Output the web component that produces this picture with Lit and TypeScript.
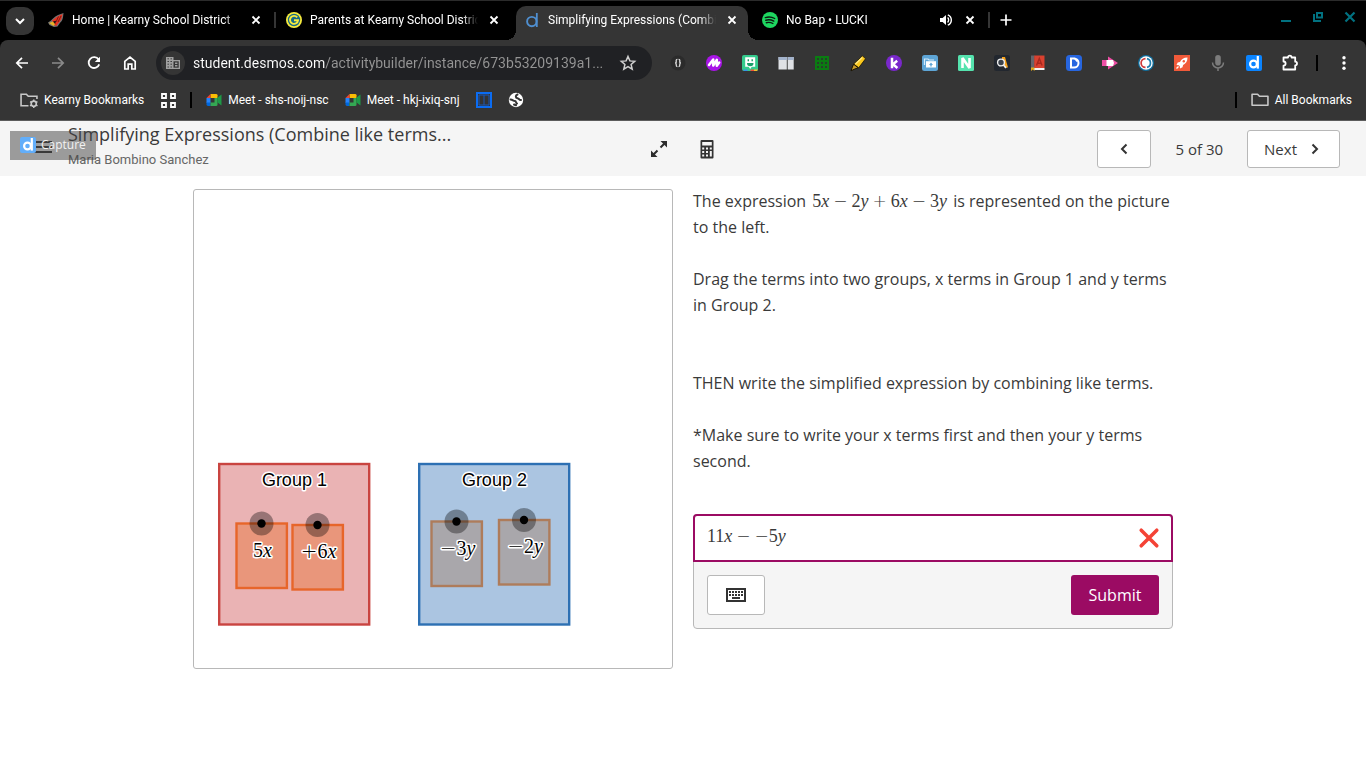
import { LitElement, html, svg, css, nothing, TemplateResult } from "lit";
import { customElement, property, state } from "lit/decorators.js";
import { classMap } from "lit/directives/class-map.js";

/* ---------- icons ---------- */

const icon = (content: TemplateResult, size = 16, box = "0 0 16 16") => html`
  <svg width=${size} height=${size} viewBox=${box} aria-hidden="true">${content}</svg>
`;

const glyph = {
  chevronDown: svg`<path d="M4 6l4 4 4-4" fill="none" stroke="#fff" stroke-width="2"/>`,
  close: svg`<path d="M4.500 4.500l7 7M11.500 4.500l-7 7" stroke="#fff" stroke-width="1.800"/>`,
  plus: svg`<path d="M8 2.500v11M2.500 8h11" stroke="#fff" stroke-width="1.700"/>`,
  back: svg`<path d="M14 8H3M8 2.800L2.800 8 8 13.200" fill="none" stroke="#fff" stroke-width="1.700"/>`,
  forward: svg`<path d="M2 8h11M8 2.800L13.200 8 8 13.200" fill="none" stroke="#8a8a8a" stroke-width="1.700"/>`,
  reload: svg`<path d="M12.600 4.600A5.400 5.400 0 1 0 13.200 9.400" fill="none" stroke="#fff" stroke-width="1.800"/><path d="M14 1.800V7H8.800z" fill="#fff"/>`,
  home: svg`<path d="M2.800 14V6.400L8 2.200l5.200 4.200V14H9.800V9.200H6.200V14z" fill="none" stroke="#fff" stroke-width="1.700"/>`,
  star: svg`<path d="M8 1.500l1.900 4.400 4.800.4-3.600 3.200 1.100 4.700L8 11.700l-4.200 2.500 1.100-4.700-3.600-3.200 4.800-.4z" fill="none" stroke="#d0d0d0" stroke-width="1.500"/>`,
  building: svg`<path d="M1 2h7.500v3H15v9H1z" fill="#a0a0a0"/><path d="M2.500 3.800h1.400M5.500 3.800h1.400M2.500 6.500h1.400M5.500 6.500h1.400M2.500 9.200h1.400M5.500 9.200h1.400M2.500 12h1.400M5.500 12h1.400" stroke="#353535" stroke-width="1"/><path d="M8.500 6.300h5.200v6.400H8.500z" fill="#353535"/><path d="M10 8.200h2.400M10 10.800h2.400" stroke="#a0a0a0" stroke-width="1.400"/>`,
  audio: svg`<path d="M2 6h2.600L8 3v10L4.600 10H2z" fill="#fff"/><path d="M9.600 5.600a3.300 3.300 0 0 1 0 4.800M9.800 2.800a5.600 5.600 0 0 1 0 10.400" fill="none" stroke="#fff" stroke-width="1.400"/>`,
  cardinal: svg`<path d="M0 10.500C4 8.500 6 4.500 10 3L15.500 1c-.4 4-.6 7.500-3.200 9.500L9.500 14.500 6 15 1.500 13z" fill="#747474"/><path d="M4 8.500c2.500-1 3.500-3.500 6.500-4.500L14.500 2c-.6 4-1.500 7-4.500 9.500L8.500 14 6 13z" fill="#e8301f"/><path d="M10.500 4.500L8 10M13 4l-3 6" stroke="#5a1510" stroke-width=".8"/><path d="M1 11l4-1.500 2 2.500-1.500 2z" fill="#e6b428"/><path d="M5 9.500l3-.8-.8 3.300z" fill="#111"/>`,
  goguardian: svg`<circle cx="8" cy="8" r="8" fill="#f6ea3c"/><circle cx="8" cy="8" r="6.200" fill="#176a86"/><path d="M11.200 5.400A4 4 0 1 0 12 8.300H8" fill="none" stroke="#f6ea3c" stroke-width="1.900"/>`,
  desmos: svg`<circle cx="7.800" cy="9.600" r="4.700" fill="none" stroke="#4f8fd0" stroke-width="1.900"/><path d="M12.800 1v14" stroke="#4f8fd0" stroke-width="1.800"/>`,
  spotify: svg`<circle cx="8" cy="8" r="8" fill="#1ed760"/><path d="M3.300 5.600c3-.9 6.700-.6 9.400.9M3.800 8.200c2.600-.7 5.600-.4 8 .9M4.300 10.700c2.200-.5 4.600-.3 6.600.8" fill="none" stroke="#0b1a10" stroke-width="1.400" stroke-linecap="round"/>`,
  minimize: svg`<path d="M3 12h10" stroke="#017180" stroke-width="2"/>`,
  restore: svg`<path d="M7 4h5v4.500H7z" fill="none" stroke="#017180" stroke-width="2"/><path d="M4 5v7h7" fill="none" stroke="#017180" stroke-width="2"/>`,
  windowClose: svg`<path d="M3.500 3.500l9 9M12.500 3.500l-9 9" stroke="#017180" stroke-width="2.200"/>`,
  braces: svg`<circle cx="8" cy="8" r="7.500" fill="#2b2b2b"/><path d="M7.400 4.300Q6 4.300 6.200 6.200T5.200 8Q6.300 8 6.200 9.800T7.400 11.700M8.600 4.300Q10 4.300 9.800 6.200T10.800 8Q9.700 8 9.800 9.800T8.600 11.700" fill="none" stroke="#e0e0e0" stroke-width="1.300"/>`,
  squiggle: svg`<circle cx="8" cy="8" r="8" fill="#a915e8"/><path d="M3 10L7.200 4.600V10.600L10.800 4.800V10.800L13.200 7.500" fill="none" stroke="#fff" stroke-width="2.500" stroke-linejoin="round" stroke-linecap="round"/>`,
  bitmoji: svg`<rect width="16" height="16" rx="2" fill="#34cb8d"/><path d="M1 14.500h4.500V16H2z" fill="#3b8fe8"/><path d="M8.500 14.500H12V16H8.500z" fill="#f24e38"/><path d="M12 14.500h4L15 16h-3z" fill="#f5bf2f"/><path d="M3.200 2.200h10v9.500H9.800L8.200 14l-1.500-2.300H3.200z" fill="#fff"/><path d="M5 8h6.500a3.200 3.200 0 0 1-6.500 0z" fill="#199f69"/><path d="M6.300 4.200v2M10.200 4.200v2" stroke="#199f69" stroke-width="1.400"/>`,
  columns: svg`<path d="M.5 2h8.300v12.500H.5zM9.700 2h6v12.500h-6z" fill="#dfe1e5"/><path d="M.5 2h8.300v3H.5zM9.700 2h6v3h-6z" fill="#a3b3cc"/>`,
  dots: svg`<path d="M1 1h14v14H1z" fill="#0b7c12"/><path d="M3 3h2v2H3zM7 3h2v2H7zM11 3h2v2h-2zM3 7h2v2H3zM7 7h2v2H7zM11 7h2v2h-2zM3 11h2v2H3zM7 11h2v2H7zM11 11h2v2h-2z" fill="#26402a"/>`,
  marker: svg`<path d="M12.500.8l3 3-6.800 9L3.600 9z" fill="#fbc81d" stroke="#1b1605" stroke-width=".8"/><path d="M3.600 9.200l4.600 3.600-3 1L1 15.800 2.400 12z" fill="#c99b28" stroke="#1b1605" stroke-width="1"/><path d="M12.300 2.500L5.500 9" stroke="#ffe88a" stroke-width="1.200"/>`,
  kami: svg`<circle cx="8" cy="8" r="8" fill="#7a28cc"/><path d="M6 2.800v10.400M11.200 5.800L7 9.200l4.400 3.800" fill="none" stroke="#fff" stroke-width="2.500"/>`,
  folders: svg`<rect width="16" height="16" rx="2.500" fill="#5ea5d6"/><path d="M2.500 10V4h3.500l1 1h5" fill="none" stroke="#d4ebfa" stroke-width="1.200"/><path d="M4 6.200h10v6.300H4z" fill="#fff"/><path d="M9 7.500l2 2.500H9.700v1.500H8.300V10H7z" fill="#5ea5d6"/>`,
  letterN: svg`<rect width="16" height="16" rx="1.500" fill="#55e3ae"/><path d="M4.500 13V3l7 10V3" fill="none" stroke="#fff" stroke-width="2.600" stroke-linejoin="bevel"/>`,
  search: svg`<rect width="16" height="16" rx="2.500" fill="#22272f"/><path d="M8 2h3l3 10.500h-2.500L8 6z" fill="#f5a21d"/><circle cx="7" cy="7.500" r="3.400" fill="#39404a" stroke="#eee" stroke-width="1.400"/><path d="M9.500 10l2.500 3" stroke="#eee" stroke-width="1.800"/>`,
  dictionary: svg`<path d="M1 .5h3.500V13H1z" fill="#65646a"/><path d="M4.200 .5H14.500V13H4.200z" fill="#d9412f"/><path d="M6.500 10.500l2.800-7 2.800 7M7.500 8.200h3.800" fill="none" stroke="#a8281e" stroke-width="1.400"/><path d="M3 13h11.500v2H3z" fill="#f2f2f2"/><path d="M1 12.500h3.500V16L2.800 14.500 1 16z" fill="#e0a91a"/>`,
  docD: svg`<rect width="16" height="16" rx="3.500" fill="#2766e0"/><path d="M5 3.500H8a4.500 4.500 0 0 1 0 9H5z" fill="none" stroke="#fff" stroke-width="2"/><path d="M8.300 3l3 3.500" stroke="#fff" stroke-width="1.600"/>`,
  arrowPink: svg`<path d="M0 5h6V1.500L16 8 6 14.500V11H0z" fill="#ef4fa6"/><path d="M4.500 5h6.500l1 3-1 3H4.500z" fill="#fff"/>`,
  ring: svg`<circle cx="8" cy="8" r="8" fill="#116f9e"/><circle cx="8" cy="8" r="6.700" fill="#fff"/><path d="M7.500 3.600a4.400 4.400 0 0 0 0 8.800" fill="none" stroke="#cf3b3b" stroke-width="1.700"/><path d="M9 3.700a4.400 4.400 0 0 1 0 8.600" fill="none" stroke="#1f7fae" stroke-width="1.700"/>`,
  rocket: svg`<path d="M0 0h16v16H0z" fill="#f15a3a"/><path d="M13.500 2.500c-4 0-6 1.800-7.500 4.400L3.700 7.500 2.500 10l2.300.2 1 1 .2 2.300 2.500-1.200.6-2.300c2.600-1.500 4.400-3.500 4.400-7.500z" fill="#fff"/><circle cx="9.800" cy="6.200" r="1.200" fill="#f15a3a"/><path d="M2.500 13.500l2-2" stroke="#fff" stroke-width="1.200"/>`,
  mic: svg`<rect x="5.200" y="0" width="5.600" height="10.500" rx="2.800" fill="#7c7c7c"/><path d="M2.500 7.500a5.500 5.500 0 0 0 11 0M8 13v3" fill="none" stroke="#7c7c7c" stroke-width="1.500"/>`,
  desmosTile: svg`<rect width="16" height="16" rx="2" fill="#0a84ff"/><circle cx="7.500" cy="9" r="3.400" fill="none" stroke="#fff" stroke-width="2.200"/><path d="M11.800 1v12.600" stroke="#fff" stroke-width="2.200"/>`,
  captureTile: svg`<rect width="16" height="16" rx="2" fill="#62aefa"/><circle cx="7.500" cy="9" r="3.400" fill="none" stroke="#fff" stroke-width="2.200"/><path d="M11.800 1v12.600" stroke="#fff" stroke-width="2.200"/>`,
  puzzle: svg`<path d="M1.500 2.500H6a1.800 1.800 0 0 1 3.600 0h3.600v4.200a1.800 1.800 0 0 1 0 3.600V14.500H1.500v-3.800a2 2 0 0 0 0-4.200z" fill="none" stroke="#fff" stroke-width="1.800" stroke-linejoin="round"/>`,
  menuDots: svg`<circle cx="8" cy="2.700" r="1.700" fill="#fff"/><circle cx="8" cy="8" r="1.700" fill="#fff"/><circle cx="8" cy="13.300" r="1.700" fill="#fff"/>`,
  folderGear: svg`<path d="M8 14H1V3h5l1.800 2H16v2.500" fill="none" stroke="#c8c8c8" stroke-width="1.500"/><circle cx="13" cy="12" r="2.400" fill="none" stroke="#c8c8c8" stroke-width="1.500"/><path d="M13 8v1.500M13 14.500V16M9.500 10l1.300.8M15.200 13.200l1.300.8M16.500 10l-1.300.8M10.800 13.200l-1.300.8" stroke="#c8c8c8" stroke-width="1.400"/>`,
  folder: svg`<path d="M1 13.500V3h5.200l1.800 2h8v8.500z" fill="none" stroke="#c8c8c8" stroke-width="1.500" stroke-linejoin="round"/>`,
  apps: svg`<path d="M2 2h4v4H2zM11 2h4v4h-4zM2 11h4v4H2zM11 11h4v4h-4z" fill="none" stroke="#fff" stroke-width="1.800"/>`,
  meet: svg`<path d="M4.500 2H10q1.500 0 1.500 1.300V6H4.500z" fill="#fbbc04"/><path d="M4.500 2v4H.5z" fill="#ea4335"/><path d="M.5 6h4v5h-4z" fill="#2684fc"/><path d="M.5 10.500h4V14H2Q.5 14 .5 12.600z" fill="#0066da"/><path d="M4.500 10.500h4V6h3v6.700Q11.500 14 10 14H4.500z" fill="#34a853"/><path d="M11.500 5.500l4-3v11l-4-3z" fill="#1e9a47"/>`,
  blueBook: svg`<path d="M1 1h14v14H1z" fill="#333" stroke="#0b6cf2" stroke-width="2"/><path d="M3 3h10v10H3zM8 3v10" fill="none" stroke="#1a58b8" stroke-width="1"/>`,
  globe: svg`<circle cx="8" cy="8" r="7.200" fill="#fff"/><path d="M2.500 7.500c2.500.2 2.500 1.500 4.500 1.500 1.500 0 .5 2 2 2.500M9.500 2.500C7 3.500 7.500 6 9.500 6.200s1 1.800 3.500 1.800M6 12.500l2 .8" fill="none" stroke="#353535" stroke-width="2" stroke-linecap="round"/>`,
  expand: svg`<path d="M9.500 6.500L14 2M6.500 9.500L2 14" stroke="#2d2d2d" stroke-width="2"/><path d="M9.500 0H16v6.500zM0 9.500V16h6.500z" fill="#2d2d2d"/>`,
  calculator: svg`<rect x="1.500" y="-1" width="13" height="18.500" rx="1" fill="#333"/><path d="M3.200 1h9.600v3.500H3.200zM3.200 6.500h2v2h-2zM7 6.500h2v2H7zM10.800 6.500h2v2h-2zM3.200 10h2v2h-2zM7 10h2v2H7zM10.800 10h2v5.500h-2zM3.200 13.500h2v2h-2zM7 13.500h2v2H7z" fill="#f5f5f5"/>`,
  previous: svg`<path d="M10.500 3.500L6 8l4.500 4.500" fill="none" stroke="#333" stroke-width="2"/>`,
  next: svg`<path d="M5.500 3.500L10 8l-4.500 4.500" fill="none" stroke="#333" stroke-width="2"/>`,
  hamburger: svg`<path d="M0 4h18M0 9h18M0 14h18" stroke="#333" stroke-width="2"/>`,
  cross: svg`<path d="M2 2L16 16M16 2L2 16" stroke="#f44336" stroke-width="3.200" stroke-linecap="round"/>`,
  keyboard: svg`<path d="M0 1h20v14H0z" fill="#333"/><path d="M2 3h16v10H2z" fill="#fff"/><path d="M3 5h14M3 8h14" stroke="#333" stroke-width="2" stroke-dasharray="2 1"/><path d="M6 11h8" stroke="#333" stroke-width="2"/>`,
};

/* ---------- typeset maths ---------- */

/** Sets letters in italics and gives signs between terms room on both sides. */
const typeset = (source: string) => {
  const parts = source.match(/\d+|[a-z]|[−+]/g) ?? [];
  return parts.map((part, i) => {
    if (/\d/.test(part)) return part;
    if (/[a-z]/.test(part)) return html`<i>${part}</i>`;
    const binary = i > 0 && !/[−+]/.test(parts[i - 1]);
    return html`<span class=${classMap({ sign: true, binary })}>${part}</span>`;
  });
};

const mathStyles = css`
  .math {
    font-family: "Liberation Serif", serif;
    font-size: 18px;
    white-space: nowrap;
  }
  .sign {
    font-family: "DejaVu Sans", sans-serif;
    font-size: 17px;
    font-weight: 200;
  }
  .binary {
    margin: 0 4px;
  }
`;

const resetStyles = css`
  *,
  *::before,
  *::after {
    box-sizing: border-box;
  }
  button {
    display: flex;
    align-items: center;
    justify-content: center;
    margin: 0;
    padding: 0;
    border: 0;
    background: none;
    color: inherit;
    font: inherit;
    cursor: pointer;
  }
  a {
    color: inherit;
    text-decoration: none;
  }
  svg {
    display: block;
    flex: none;
    overflow: visible;
  }
`;

/* ---------- browser tab ---------- */

@customElement("browser-tab")
export class BrowserTab extends LitElement {
  @property() label = "";
  @property({ attribute: false }) favicon: TemplateResult = glyph.desmos;
  @property({ type: Boolean, reflect: true }) active = false;
  @property({ type: Boolean }) playing = false;

  static styles = [
    resetStyles,
    css`
      :host {
        flex: 0 1 232px;
        min-width: 0;
        position: relative;
        display: flex;
        align-items: center;
        gap: 8px;
        height: 34px;
        padding: 0 8px 6px;
        color: #fff;
      }
      :host([active]) {
        border-radius: 10px 10px 0 0;
        background: #353535;
      }
      :host([active])::before,
      :host([active])::after {
        content: "";
        position: absolute;
        bottom: 0;
        width: 10px;
        height: 10px;
      }
      :host([active])::before {
        right: 100%;
        background: radial-gradient(circle at 0 0, transparent 10px, #353535 10px);
      }
      :host([active])::after {
        left: 100%;
        background: radial-gradient(circle at 100% 0, transparent 10px, #353535 10px);
      }
      .title {
        flex: 1;
        min-width: 0;
        overflow: hidden;
        white-space: nowrap;
        -webkit-mask-image: linear-gradient(to left, transparent, #000 16px);
        mask-image: linear-gradient(to left, transparent, #000 16px);
      }
    `,
  ];

  render() {
    return html`
      ${icon(this.favicon)}
      <span class="title">${this.label}</span>
      ${this.playing ? html`<button aria-label="Mute tab">${icon(glyph.audio)}</button>` : nothing}
      <button aria-label="Close tab">${icon(glyph.close)}</button>
    `;
  }
}

/* ---------- browser frame ---------- */

@customElement("browser-chrome")
export class BrowserChrome extends LitElement {
  private extensions: [string, TemplateResult][] = [
    ["JSON viewer", glyph.braces],
    ["Drawing", glyph.squiggle],
    ["Bitmoji", glyph.bitmoji],
    ["Split view", glyph.columns],
    ["Grid", glyph.dots],
    ["Highlighter", glyph.marker],
    ["Kami", glyph.kami],
    ["Screen share", glyph.folders],
    ["Nearpod", glyph.letterN],
    ["Search", glyph.search],
    ["Dictionary", glyph.dictionary],
    ["Documents", glyph.docD],
    ["Screen recorder", glyph.arrowPink],
    ["Reader", glyph.ring],
    ["Launcher", glyph.rocket],
    ["Voice typing", glyph.mic],
    ["Desmos", glyph.desmosTile],
    ["Extensions", glyph.puzzle],
  ];

  static styles = [
    resetStyles,
    css`
      :host {
        display: block;
        background: #000;
        color: #fff;
        font-family: Roboto, sans-serif;
        font-size: 12px;
        line-height: 16px;
      }
      .tabs {
        display: flex;
        align-items: center;
        height: 40px;
        padding: 0 8px 0 6px;
        border-top: 1px solid #2b2b2b;
      }
      .strip {
        flex: 1;
        min-width: 0;
        display: flex;
        align-self: flex-end;
        align-items: center;
        margin-left: 6px;
      }
      .find {
        width: 28px;
        height: 28px;
        border-radius: 10px;
        background: #353535;
      }
      .divider {
        flex: none;
        width: 2px;
        height: 16px;
        margin: 0 2px 6px;
        background: #353535;
      }
      .divider.clear {
        background: none;
      }
      .new {
        width: 28px;
        height: 28px;
        margin-bottom: 6px;
      }
      .window {
        display: flex;
        align-self: flex-start;
        gap: 16px;
        padding-top: 8px;
      }
      .toolbar {
        display: flex;
        align-items: center;
        gap: 8px;
        height: 46px;
        padding: 0 8px;
        border-radius: 8px 8px 0 0;
        background: #353535;
      }
      .toolbar button {
        flex: none;
        width: 28px;
        height: 28px;
      }
      .omnibox {
        flex: 1;
        min-width: 0;
        display: flex;
        align-items: center;
        gap: 8px;
        height: 34px;
        margin: 0 4px;
        padding: 0 10px 0 5px;
        border-radius: 17px;
        background: #202124;
      }
      .omnibox .site {
        width: 24px;
        height: 24px;
        border-radius: 12px;
        background: #353535;
      }
      .address {
        flex: 1;
        min-width: 0;
        height: 20px;
        margin: 0;
        padding: 0;
        border: 0;
        outline: 0;
        background: linear-gradient(90deg, #fff 132px, #959595 132px);
        background-clip: text;
        -webkit-background-clip: text;
        color: transparent;
        font: 14px/20px Roboto, sans-serif;
      }
      .rule {
        flex: none;
        width: 2px;
        height: 16px;
        background: #000;
      }
      .toolbar .rule {
        margin: 0 4px;
      }
      .bookmarks {
        display: flex;
        align-items: center;
        gap: 16px;
        height: 35px;
        padding: 0 14px 6px 20px;
        border-bottom: 1px solid #5c5c5c;
        background: #353535;
      }
      .bookmarks .rule {
        margin: 0 -2px;
      }
      .bookmarks a,
      .bookmarks button {
        display: flex;
        align-items: center;
        gap: 6px;
        white-space: nowrap;
      }
      .bookmarks .space {
        flex: 1;
      }
    `,
  ];

  render() {
    return html`
      <div class="tabs">
        <button class="find" aria-label="Search tabs">${icon(glyph.chevronDown)}</button>
        <div class="strip">
          <browser-tab label="Home | Kearny School District" .favicon=${glyph.cardinal}></browser-tab>
          <span class="divider"></span>
          <browser-tab label="Parents at Kearny School District" .favicon=${glyph.goguardian}></browser-tab>
          <span class="divider clear"></span>
          <browser-tab active label="Simplifying Expressions (Combine like terms)" .favicon=${glyph.desmos}></browser-tab>
          <span class="divider clear"></span>
          <browser-tab playing label="No Bap • LUCKI" .favicon=${glyph.spotify}></browser-tab>
          <span class="divider"></span>
          <button class="new" aria-label="New tab">${icon(glyph.plus)}</button>
        </div>
        <div class="window">
          <button aria-label="Minimize">${icon(glyph.minimize)}</button>
          <button aria-label="Restore">${icon(glyph.restore)}</button>
          <button aria-label="Close window">${icon(glyph.windowClose)}</button>
        </div>
      </div>
      <div class="toolbar">
        <button aria-label="Back">${icon(glyph.back)}</button>
        <button aria-label="Forward">${icon(glyph.forward)}</button>
        <button aria-label="Reload">${icon(glyph.reload)}</button>
        <button aria-label="Home">${icon(glyph.home)}</button>
        <div class="omnibox">
          <button class="site" aria-label="Site information">${icon(glyph.building)}</button>
          <input
            class="address"
            aria-label="Address"
            spellcheck="false"
            .value=${"student.desmos.com/activitybuilder/instance/673b53209139a1..."}
          />
          <button aria-label="Bookmark this page">${icon(glyph.star)}</button>
        </div>
        ${this.extensions.map(([name, mark]) => html`<button aria-label=${name}>${icon(mark)}</button>`)}
        <span class="rule"></span>
        <button aria-label="Menu">${icon(glyph.menuDots)}</button>
      </div>
      <div class="bookmarks">
        <button>${icon(glyph.folderGear, 18, "0 0 17 17")}Kearny Bookmarks</button>
        <a href="#apps" aria-label="Apps">${icon(glyph.apps)}</a>
        <span class="rule"></span>
        <a href="#meet-shs">${icon(glyph.meet)}Meet - shs-noij-nsc</a>
        <a href="#meet-hkj">${icon(glyph.meet)}Meet - hkj-ixiq-snj</a>
        <a href="#book" aria-label="Textbook">${icon(glyph.blueBook)}</a>
        <a href="#web" aria-label="Web">${icon(glyph.globe)}</a>
        <span class="space"></span>
        <span class="rule"></span>
        <button>${icon(glyph.folder, 18, "0 0 17 17")}All Bookmarks</button>
      </div>
    `;
  }
}

/* ---------- graph with draggable terms ---------- */

interface Term {
  sign: string;
  digits: string;
  letter: string;
  x: number;
  y: number;
  fill: string;
  stroke: string;
}

@customElement("term-graph")
export class TermGraph extends LitElement {
  private terms: Term[] = [
    { sign: "", digits: "5", letter: "x", x: 67.5, y: 333.5, fill: "#e9967b", stroke: "#e7652a" },
    { sign: "+", digits: "6", letter: "x", x: 123.5, y: 335, fill: "#e9967b", stroke: "#e7652a" },
    { sign: "−", digits: "3", letter: "y", x: 262.5, y: 331.5, fill: "#a9a7ab", stroke: "#ae7c5b" },
    { sign: "−", digits: "2", letter: "y", x: 330, y: 330, fill: "#a9a7ab", stroke: "#ae7c5b" },
  ];

  static styles = css`
    :host {
      display: block;
      overflow: hidden;
      aspect-ratio: 1;
      border: 1px solid #b8b8b8;
      border-radius: 3px;
      background: #fff;
    }
    svg {
      display: block;
      width: 100%;
    }
    .box {
      stroke-width: 2.4;
    }
    .label {
      fill: #000;
      stroke: #fff;
      stroke-width: 3;
      stroke-linejoin: round;
      paint-order: stroke;
      text-anchor: middle;
      font-family: "Liberation Sans", sans-serif;
      font-size: 18px;
    }
    .label.term {
      font-family: "Liberation Serif", serif;
      font-size: 20px;
    }
    .sign {
      font-family: "DejaVu Sans", sans-serif;
      font-size: 20px;
      font-weight: 200;
    }
    .letter {
      font-style: italic;
    }
    .halo {
      fill: #000;
      fill-opacity: 0.35;
    }
  `;

  render() {
    return html`
      <svg viewBox="0 0 478 478" role="img" aria-label="Two groups holding the terms of the expression">
        <rect class="box" x="25.200" y="274" width="150" height="160.500" fill="#eab3b4" stroke="#c94440" />
        <rect class="box" x="225.200" y="274" width="150" height="160.500" fill="#abc5e1" stroke="#2d70b3" />
        <text class="label" x="100.400" y="296">Group 1</text>
        <text class="label" x="300.400" y="296">Group 2</text>
        ${this.terms.map(
          (t) => svg`
            <rect class="box" x=${t.x - 25} y=${t.y} width="50.400" height="64.500" fill=${t.fill} stroke=${t.stroke} />
            <circle class="halo" cx=${t.x} cy=${t.y} r="12" />
            <circle cx=${t.x} cy=${t.y} r="4.200" />
            <text class="label term" x=${t.x + 1} y=${t.y + 33}>${
              t.sign ? svg`<tspan class="sign">${t.sign}</tspan>` : nothing
            }${t.digits}<tspan class="letter">${t.letter}</tspan></text>
          `
        )}
      </svg>
    `;
  }
}

/* ---------- answer box ---------- */

@customElement("answer-box")
export class AnswerBox extends LitElement {
  @state() private value = "11x − −5y";

  static styles = [
    resetStyles,
    mathStyles,
    css`
      :host {
        display: block;
        border: 1px solid #b8b8b8;
        border-radius: 4px;
        background: #f5f5f5;
      }
      .field {
        position: relative;
        display: flex;
        align-items: center;
        height: 48px;
        margin: -1px -1px 0;
        padding: 0 12px;
        border: 2px solid #9b0b63;
        border-radius: 4px 4px 0 0;
        background: #fff;
      }
      .shown {
        flex: 1;
        padding-bottom: 4px;
        line-height: 24px;
      }
      .entry {
        position: absolute;
        inset: 0;
        width: 100%;
        padding: 0 44px 4px 12px;
        border: 0;
        outline: 0;
        background: none;
        color: transparent;
        caret-color: #333;
      }
      .footer {
        display: flex;
        justify-content: space-between;
        padding: 13px;
      }
      .keypad {
        width: 58px;
        height: 40px;
        border: 1px solid #b8b8b8;
        border-radius: 3px;
        background: #fff;
      }
      .submit {
        min-width: 88px;
        height: 40px;
        padding: 0 16px;
        border-radius: 3px;
        background: #9b0b63;
        color: #fff;
      }
    `,
  ];

  private onInput(e: Event) {
    this.value = (e.target as HTMLInputElement).value.replace(/-/g, "−");
  }

  render() {
    return html`
      <div class="field">
        <span class="shown math" aria-hidden="true">${typeset(this.value)}</span>
        ${icon(glyph.cross, 20, "0 0 18 18")}
        <input class="entry math" aria-label="Simplified expression" .value=${this.value} @input=${this.onInput} />
      </div>
      <div class="footer">
        <button class="keypad" aria-label="Open keypad">${icon(glyph.keyboard, 20, "0 0 20 16")}</button>
        <button class="submit">Submit</button>
      </div>
    `;
  }
}

/* ---------- page ---------- */

@customElement("app-root")
export class AppRoot extends LitElement {
  static styles = [
    resetStyles,
    mathStyles,
    css`
      :host {
        display: block;
        min-height: 100vh;
        background: #fff;
        color: #3a3a3a;
        font-family: "Open Sans", sans-serif;
        font-size: 16px;
        line-height: 26px;
      }
      .header {
        position: relative;
        display: grid;
        grid-template-columns: 1fr auto 1fr;
        align-items: center;
        height: 55px;
        padding: 0 26px;
        background: #f5f5f5;
      }
      .left {
        align-self: start;
        display: flex;
        align-items: center;
        gap: 16px;
        min-width: 0;
        padding-left: 8px;
      }
      .names {
        min-width: 0;
        white-space: nowrap;
      }
      .name {
        margin: 0;
        font-size: 18px;
        font-weight: 400;
        line-height: 26px;
      }
      .student {
        margin: 0;
        color: #666;
        font-family: Roboto, sans-serif;
        font-size: 13px;
        line-height: 26px;
      }
      .tools {
        display: flex;
        gap: 16px;
      }
      .tools button {
        width: 32px;
        height: 32px;
      }
      .pager {
        display: flex;
        align-items: center;
        justify-content: flex-end;
        gap: 24px;
        font-size: 15px;
      }
      .pager button {
        gap: 10px;
        height: 38px;
        padding: 0 16px;
        border: 1px solid #b8b8b8;
        border-radius: 3px;
        background: #fff;
      }
      .pager .previous {
        width: 54px;
      }
      .capture {
        position: absolute;
        top: 10px;
        left: 10px;
        display: flex;
        align-items: center;
        gap: 5px;
        height: 29px;
        padding: 0 10px 2px;
        background: rgba(65, 65, 65, 0.5);
        color: #f2f2f2;
        font-size: 12px;
      }
      .main {
        display: grid;
        grid-template-columns: repeat(2, minmax(0, 480px));
        justify-content: center;
        align-items: start;
        gap: 20px;
        padding: 12px 20px;
      }
      term-graph {
        margin-top: 1px;
      }
      .task p {
        margin: 0 0 26px;
      }
      .task .gap {
        margin-bottom: 52px;
      }
      .task .last {
        margin-bottom: 40px;
      }
      .inline {
        margin: 0 2px;
        line-height: 20px;
      }
    `,
  ];

  render() {
    return html`
      <browser-chrome></browser-chrome>
      <header class="header">
        <div class="left">
          <button aria-label="Activity menu">${icon(glyph.hamburger, 18, "0 0 18 18")}</button>
          <div class="names">
            <h1 class="name">Simplifying Expressions (Combine like terms...</h1>
            <p class="student">Maria Bombino Sanchez</p>
          </div>
        </div>
        <div class="tools">
          <button aria-label="Full screen">${icon(glyph.expand)}</button>
          <button aria-label="Calculator">${icon(glyph.calculator)}</button>
        </div>
        <nav class="pager" aria-label="Screens">
          <button class="previous" aria-label="Previous">${icon(glyph.previous)}</button>
          <span>5 of 30</span>
          <button>Next ${icon(glyph.next)}</button>
        </nav>
        <button class="capture">${icon(glyph.captureTile)}Capture</button>
      </header>
      <main class="main">
        <term-graph></term-graph>
        <section class="task">
          <p>
            The expression <span class="math inline">${typeset("5x−2y+6x−3y")}</span> is represented on the picture
            to the left.
          </p>
          <p class="gap">Drag the terms into two groups, x terms in Group 1 and y terms in Group 2.</p>
          <p>THEN write the simplified expression by combining like terms.</p>
          <p class="last">*Make sure to write your x terms first and then your y terms second.</p>
          <answer-box></answer-box>
        </section>
      </main>
    `;
  }
}
